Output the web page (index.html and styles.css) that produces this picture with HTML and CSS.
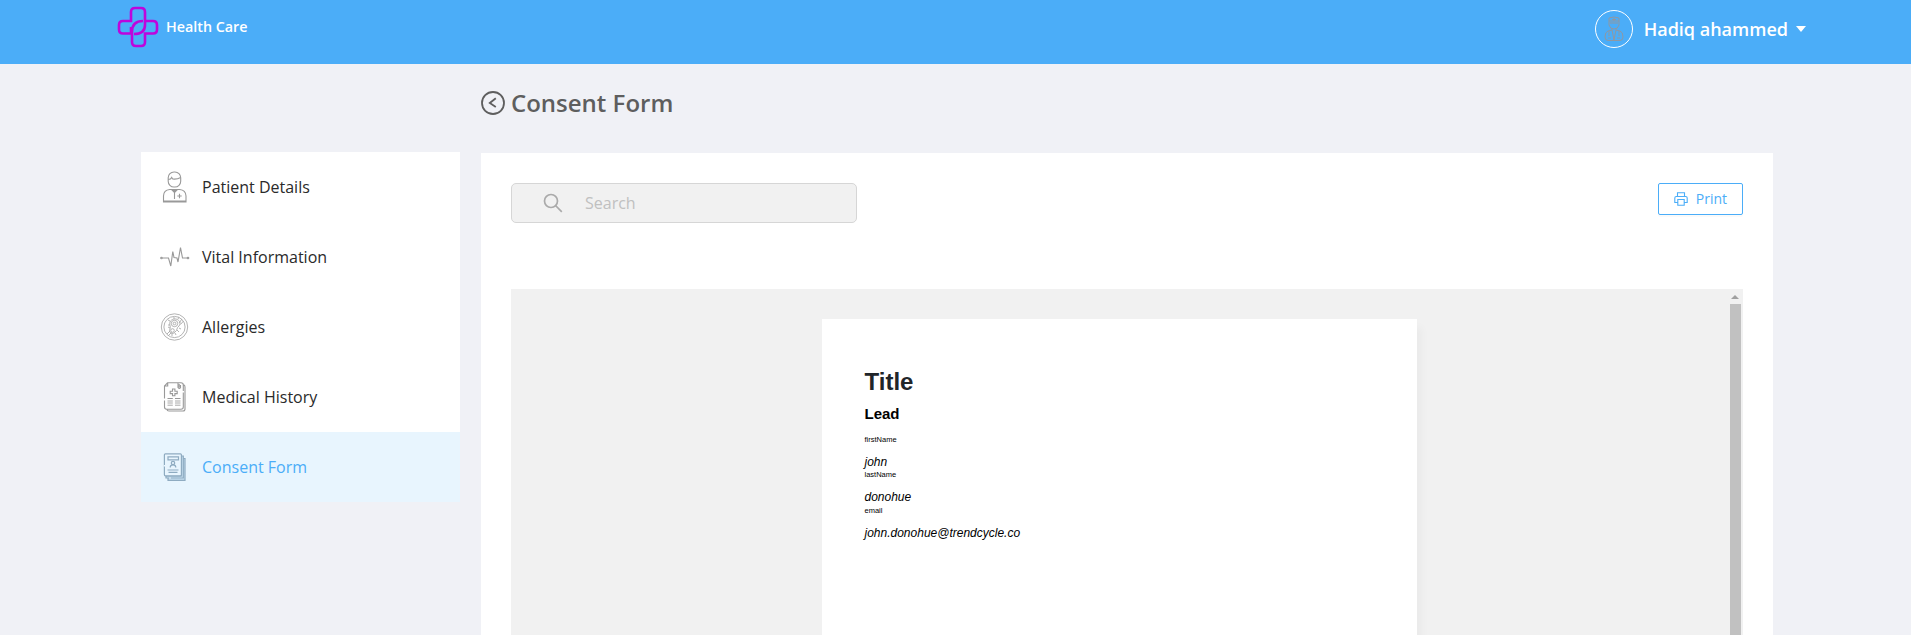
FILE: index.html
```html
<!DOCTYPE html>
<html lang="en">
<head>
<meta charset="utf-8">
<title>Consent Form</title>
<link rel="stylesheet" href="styles.css">
</head>
<body>
<header class="topbar">
  <div class="brand">
    <svg class="brand-mark" viewBox="0 0 42 42" fill="none" stroke="#be05dc" stroke-width="2.6">
      <path d="M14 21V27.500H6Q2 27.500 2 23.500V19Q2 15 6 15H14V6Q14 2 18 2H24Q28 2 28 6V19Q28 28 17 28"/>
      <path d="M28 15H36Q40 15 40 19V23.500Q40 27.500 36 27.500H28V36Q28 40 24 40H19Q15 40 15 36V26Q15 15 26 15"/>
    </svg>
    <span class="brand-name">Health Care</span>
  </div>
  <div class="user">
    <span class="avatar">
      <svg width="20" height="26" viewBox="0 0 20 26" fill="none" stroke="#8f98a3" stroke-width="1">
        <path d="M5 5V2Q10 0 15 2V5ZM5 5V9Q6 13 10 13T15 9V5M8 3.500H12M10 2V5M6 7H14M8 12V14L4 15Q1 16 1 21Q1 24.500 4 24.500H16Q19 24.500 19 21Q19 16 16 15L12 14V12M8 14L10 24L12 14M5 15V20M15 15V20M4 22H7M13 22H16"/>
      </svg>
    </span>
    <span class="user-name">Hadiq ahammed</span>
    <span class="caret"></span>
  </div>
</header>

<div class="heading">
  <svg width="24" height="24" viewBox="0 0 24 24" fill="none" stroke="#5e5e5e" stroke-width="1.8"><circle cx="12" cy="12" r="11"/><path d="M14.800 7.300L8.800 12L14.800 16"/></svg>
  <h1>Consent Form</h1>
</div>

<div class="layout">
  <nav class="sidebar">
    <a class="item">
      <svg class="icon" viewBox="0 0 32 32" fill="none" stroke="#999" stroke-width="1.1">
        <rect x="9.200" y="1" width="12.500" height="15" rx="5.800"/>
        <path d="M9.200 8.500Q12 8.500 12.700 6.500L13.700 8Q18 8.500 21.700 6.500M4.500 31V25Q4.700 19 10.700 18.500H20.700Q26.700 19 27 25V31ZM4.500 30H27M15.500 21V28M20.500 22.800V27.200M18.300 25H22.700"/>
        <path fill="#999" d="M13 19H18L15.500 21.500Z"/>
      </svg>
      <span>Patient Details</span>
    </a>
    <a class="item">
      <svg class="icon" viewBox="0 0 32 32" fill="none" stroke="#999" stroke-width="1.100">
        <circle cx="2.500" cy="17" r=".8"/><circle cx="29" cy="17" r=".8"/>
        <path d="M3.500 17H9.500L11.800 25L13.800 10.500L15 16.500L18 17L19 21L21.500 6.500L23.500 17H28"/>
      </svg>
      <span>Vital Information</span>
    </a>
    <a class="item">
      <svg class="icon" viewBox="0 0 32 32" fill="none" stroke="#a5a5a5" stroke-width=".85">
        <circle cx="15.500" cy="16" r="13.200"/><circle cx="15.500" cy="16" r="10.600"/>
        <path d="M8 23L11 20M9.500 24.500L12.500 21.500M20 12L23 8M21.500 13.500L24.500 10M19 9C17 7 12 8 11 11C10 14 12 15 11 18C9 22 14 24 16 21C19 19 17 17 20 15C22 12 21 10 19 9Z"/>
        <circle cx="15.500" cy="12.500" r="3.200"/><circle cx="15.500" cy="12.500" r="1.300"/><circle cx="13.500" cy="19.500" r="1.800"/>
        <path d="M11 10L9 9M15 8V6M19 8L20 6M11 14H9M11 17L9 16M18 19L20 21M16 22L17 24M13 23V25M20 17L22 18"/>
      </svg>
      <span>Allergies</span>
    </a>
    <a class="item">
      <svg class="icon" viewBox="0 0 32 32" fill="none" stroke="#999" stroke-width="1.100">
        <path d="M5.500 17.500V5L8.500 1.800H22Q24.300 1.800 24.300 4V10M24.300 11.500V26Q24.300 28.200 22 28.200H7.700Q5.500 28.200 5.500 26V19.500M5.800 5H8.700V2M24.500 3.800Q26 4 26 6V28Q26 30 24 30H10Q8 30 8 28.500"/>
        <path d="M19 2V6.500Q20.500 8.500 21.500 6.500V4M20.200 3V6.500"/>
        <path d="M13.500 8H15.900V10.200H18.200V12.600H15.900V14.800H13.500V12.600H11.200V10.200H13.500Z"/>
        <path d="M8.500 17.500H13.800M16 17.500H21.500"/>
        <path stroke-width=".85" d="M8.500 20H13.800M16 20H21.500M8.500 22H13.800M16 22H21.500M8.500 24.200H13.800M16 24.200H21.500"/>
      </svg>
      <span>Medical History</span>
    </a>
    <a class="item active">
      <svg class="icon" viewBox="0 0 32 32" fill="none" stroke="#8eabc1" stroke-width="1.200">
        <path fill="#c6dff0" d="M9 27V29.300H26V7.500H24.300V27ZM7 25V27H24.300V5H22.300V25Z"/>
        <rect x="5.400" y="2.800" width="17" height="22" rx="1" fill="#e8f5fe"/>
        <path stroke="#e8f5fe" d="M5.400 14V15.500M10 27H12"/>
        <path d="M9 5.800H19.500V8.800H9ZM8.500 19H19.500M9.500 21.300H18.500M11.200 16.500Q11.200 13.800 14 13.800T16.800 16.500"/><circle cx="14" cy="12" r="1.700"/>
      </svg>
      <span>Consent Form</span>
    </a>
  </nav>

  <main class="panel">
    <div class="tools">
      <div class="search">
        <svg width="20" height="20" viewBox="0 0 20 20" fill="none" stroke="#aaa" stroke-width="1.700"><circle cx="8" cy="8" r="6.500"/><path d="M12.500 12.500L18.800 18.800"/></svg>
        <span>Search</span>
      </div>
      <button class="print">
        <svg width="14" height="14" viewBox="0 0 14 14" fill="none" stroke="#4badf8" stroke-width="1.100"><path d="M3.500 4.500V.8H10.500V4.500M3.500 10.500H.8V6Q.8 4.500 2.300 4.500H11.700Q13.200 4.500 13.200 6V10.500H10.500M3.800 7.500H10.200V13.200H3.800Z"/></svg>
        <span>Print</span>
      </button>
    </div>
    <div class="viewer">
      <article class="sheet">
        <h2>Title</h2>
        <h3>Lead</h3>
        <dl>
          <dt>firstName</dt><dd>john</dd>
          <dt>lastName</dt><dd>donohue</dd>
          <dt class="late">email</dt><dd>john.donohue@trendcycle.co</dd>
        </dl>
      </article>
      <div class="scrollbar"><span class="arrow"></span><span class="thumb"></span></div>
    </div>
  </main>
</div>
</body>
</html>
```
FILE: styles.css
```css
* { box-sizing: border-box; }
body {
  margin: 0;
  height: 635px;
  overflow: hidden;
  background: #f0f1f6;
  font-family: "Open Sans", "Noto Sans", sans-serif;
  display: flex;
  flex-direction: column;
}
h1, h2, h3, dl, dd { margin: 0; }

.topbar {
  height: 64px;
  flex: none;
  background: #4badf8;
  color: #fff;
  display: flex;
  justify-content: space-between;
  align-items: flex-start;
  padding: 6px 105px 0 116.5px;
}
.brand { display: flex; gap: 7.5px; }
.brand-mark { width: 42px; height: 42px; }
.brand-name { font-weight: 600; font-size: 14.3px; line-height: 20px; padding-top: 11px; }
.user { display: flex; align-items: center; padding-top: 4px; }
.avatar {
  width: 38px;
  height: 38px;
  border: 1px solid #fff;
  border-radius: 50%;
  display: grid;
  place-items: center;
}
.user-name { font-size: 18px; line-height: 24px; font-weight: 600; margin-left: 11px; }
.caret {
  margin-left: 8px;
  border: 5px solid transparent;
  border-top: 6px solid #fff;
  border-bottom: 0;
}

.heading {
  height: 88px;
  flex: none;
  display: flex;
  align-items: flex-start;
  gap: 6px;
  padding: 27px 0 0 481px;
}
.heading h1 { font-size: 24px; line-height: 24px; font-weight: 600; color: #5e5e5e; }

.layout {
  flex: 1;
  min-height: 0;
  display: grid;
  grid-template-columns: 319px 1292px;
  column-gap: 21px;
  padding-left: 141px;
}
.sidebar { height: 350px; background: #fff; }
.item {
  height: 70px;
  display: flex;
  align-items: center;
  gap: 11px;
  padding-left: 18px;
  font-size: 16px;
  color: #2a2a2a;
}
.icon { width: 32px; height: 32px; }
.active { background: #e8f5fe; color: #4badf8; }

.panel {
  margin-top: 1px;
  background: #fff;
  padding: 30px 30px 0;
  display: flex;
  flex-direction: column;
}
.tools { height: 106px; display: flex; justify-content: space-between; align-items: flex-start; }
.search {
  width: 346px;
  height: 40px;
  border: 1px solid #d6d6d6;
  border-radius: 5px;
  background: #f1f1f1;
  display: flex;
  align-items: center;
  gap: 22px;
  padding-left: 31px;
  font-size: 16px;
  color: #c0c0c0;
}
.print {
  width: 85px;
  height: 32px;
  padding: 0 0 1px;
  border: 1px solid #4badf8;
  border-radius: 2px;
  background: #fff;
  box-shadow: 0 2px 0 rgba(0, 0, 0, .02);
  color: #4badf8;
  display: flex;
  align-items: center;
  justify-content: center;
  gap: 8px;
  font: 14px "Open Sans", sans-serif;
}
.viewer {
  flex: 1;
  background: #f1f1f1;
  display: flex;
  justify-content: space-between;
  padding-left: 311px;
}
.sheet {
  width: 595px;
  margin-top: 30px;
  padding: 49px 42px 0 42.5px;
  background: #fff;
  box-shadow: 5px 8px 8px rgba(0, 0, 0, .03);
  font-family: "Liberation Sans", Arial, sans-serif;
  color: #000;
}
.sheet h2 { font-size: 24px; line-height: 28px; color: #212529; }
.sheet h3 { font-size: 15px; line-height: 18px; margin: 9px 0 12px; }
.sheet dt { font-size: 7.5px; line-height: 10px; }
.sheet dd { font-size: 12px; line-height: 14px; font-style: italic; margin: 10px 0 1px; }
.sheet .late { margin-top: 2px; }
.scrollbar {
  width: 15px;
  background: #f1f1f1;
  display: flex;
  flex-direction: column;
  align-items: flex-start;
  padding: 6px 2px 0;
}
.arrow {
  margin-left: 1px;
  border: 4px solid transparent;
  border-top: 0;
  border-bottom-color: #a0a0a0;
}
.thumb { width: 11px; flex: 1; margin-top: 5px; background: #c1c1c1; }
```
